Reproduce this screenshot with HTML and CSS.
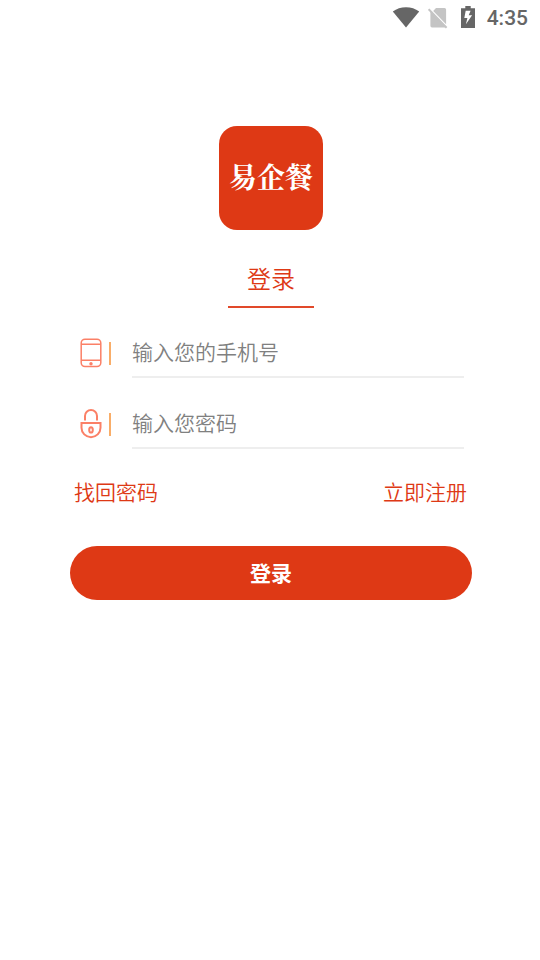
FILE: index.html
```html
<!DOCTYPE html>
<html lang="zh-CN">
<head>
<meta charset="utf-8">
<meta name="viewport" content="width=device-width, initial-scale=1">
<title>登录</title>
<link rel="stylesheet" href="styles.css">
</head>
<body>
<header class="status">
  <svg class="wifi" width="28" height="22" viewBox="0 0 28 22" aria-hidden="true"><path d="M.8 4.600C4.600 1.600 9 .2 14 .2s9.400 1.400 13.200 4.400L14 20.600z"/></svg>
  <svg class="sim" width="20" height="22" viewBox="0 0 20 22" aria-hidden="true"><path d="M8 1h8.500q1.600 0 1.600 1.600v14.600L5.200 4zM2.400 3.800 18 20.400H4q-1.600 0-1.600-1.600z"/><path class="slash" d="M.6 2.200 18.600 20.800"/></svg>
  <svg class="battery" width="14" height="22" viewBox="0 0 14 22" aria-hidden="true"><path d="M4.300 0h5.400v2.200H14V22H0V2.200h4.300z"/><path class="bolt" d="M9.600 4.700H4.700L3.300 12h3.100l-1.500 6.300 6.200-9.100H7.700z"/></svg>
  <time class="clock">4:35</time>
</header>
<main class="page">
  <div class="logo">易企餐</div>
  <h1 class="tab">登录</h1>
  <form class="form">
    <div class="field">
      <label class="icon" for="phone">
        <svg width="22" height="30" viewBox="0 0 22 30" role="img" aria-label="手机号"><rect x="1.200" y="1.200" width="19.600" height="27.400" rx="3.800"/><path d="M1.200 6.200h19.600M1.200 22.300h19.600"/><circle class="dot" cx="11" cy="25.700" r="1.700"/></svg>
      </label>
      <input id="phone" type="tel" placeholder="输入您的手机号">
    </div>
    <div class="field">
      <label class="icon" for="password">
        <svg class="lock" width="22" height="30" viewBox="0 0 22 30" role="img" aria-label="密码"><path d="M5 11.500V7a6 6 0 0 1 12 0v4.500M1.500 13.900h19v4.800a9.500 9.500 0 0 1-19 0z"/><ellipse cx="11" cy="20.900" rx="1.800" ry="2.700"/></svg>
      </label>
      <input id="password" type="password" placeholder="输入您密码">
    </div>
    <nav class="links"><a href="#recover">找回密码</a><a href="#register">立即注册</a></nav>
    <button class="submit" type="submit">登录</button>
  </form>
</main>
</body>
</html>
```
FILE: styles.css
```css
* { box-sizing: border-box; }

body {
  margin: 0;
  background: #fff;
  color: #de3915;
  font-family: "Noto Sans CJK SC", sans-serif;
  font-weight: 350;
}

.status {
  display: flex;
  align-items: center;
  justify-content: flex-end;
  height: 36px;
  padding-right: 12px;
  fill: #666;
}

.sim { margin-left: 8px; fill: #c4c4c4; }
.slash { stroke: #c4c4c4; stroke-width: 2; }
.battery { margin: 0 12px 2px 13px; }
.bolt { fill: #fff; }

.clock {
  color: #666;
  font: 500 21px/24px Roboto, sans-serif;
}

.page {
  display: flex;
  flex-direction: column;
  align-items: center;
  padding: 90px 68px 0 70px;
}

.logo {
  width: 104px;
  height: 104px;
  border-radius: 18px;
  background: #de3915;
  color: #fff;
  font: 700 28px/100px "Noto Serif CJK SC", serif;
  text-align: center;
}

.tab {
  width: 86px;
  height: 56px;
  margin: 22px 0 0;
  border-bottom: 2px solid #e1492a;
  font-size: 24px;
  font-weight: 350;
  line-height: 52px;
  text-align: center;
}

.form { width: 100%; margin-top: 16px; }

.field {
  display: flex;
  height: 54px;
  padding: 0 8px 0 10px;
}

.field + .field { margin-top: 17px; }

.icon {
  display: flex;
  align-items: center;
  height: 58px;
  width: 52px;
}

.icon::after {
  content: "";
  width: 2px;
  height: 23px;
  margin-left: 7px;
  background: #f9ad68;
}

.icon svg {
  fill: none;
  stroke: #fb8067;
  stroke-width: 1.500;
}

.icon .lock { stroke-width: 2; }
.icon .dot { fill: #fb8067; stroke: none; }

.field input {
  flex: 1;
  min-width: 0;
  padding: 2px 0 0;
  border: 0;
  border-bottom: 2px solid #eee;
  outline: 0;
  background: none;
  color: #333;
  font: 350 21px "Noto Sans CJK SC", sans-serif;
}

.field input::placeholder { color: #808080; opacity: 1; }

.links {
  display: flex;
  justify-content: space-between;
  margin-top: 26px;
  padding: 0 5px 0 4px;
  font-size: 21px;
  line-height: 32px;
}

.links a { color: inherit; text-decoration: none; }

.submit {
  width: 100%;
  height: 54px;
  margin-top: 39px;
  padding: 0 0 2px;
  border: 0;
  border-radius: 27px;
  background: #de3915;
  color: #fff;
  font: 700 21px "Noto Sans CJK SC", sans-serif;
}
```
